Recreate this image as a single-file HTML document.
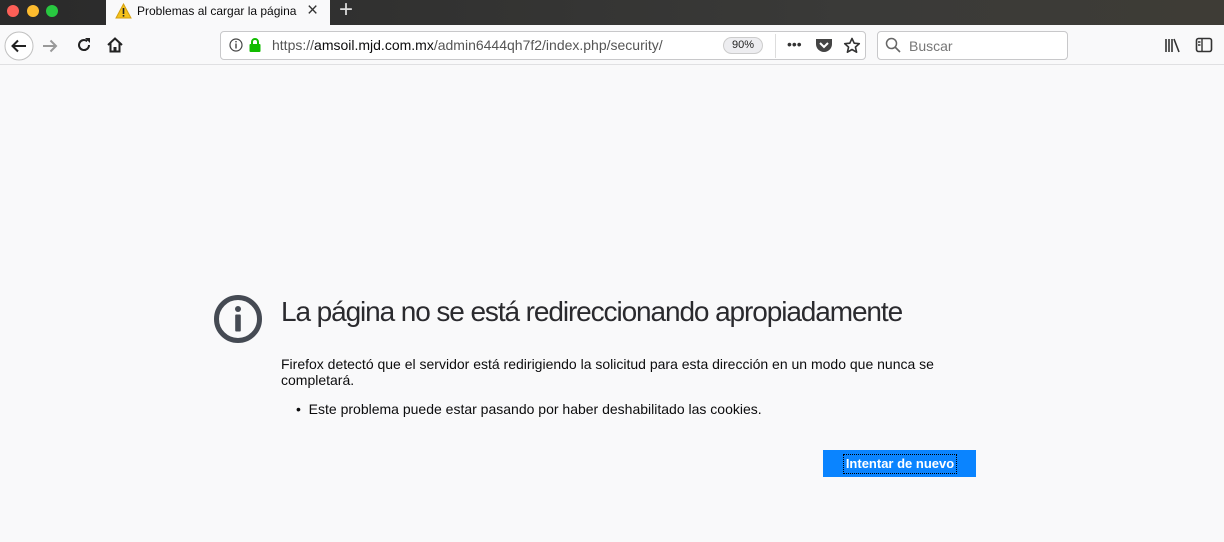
<!DOCTYPE html>
<html><head><meta charset="utf-8"><style>
*{margin:0;padding:0;box-sizing:border-box}
body{width:1224px;height:542px;background:#f9f9fa;font-family:"Liberation Sans",sans-serif;position:relative;overflow:hidden}
.abs{position:absolute}
.tabs{left:0;top:0;width:1224px;height:25px;background:linear-gradient(90deg,#2a2a2a,#3a3a38 70%,#3e3c36)}
.tab{left:106px;top:0;width:224px;height:25px;background:#f9f9fa;font-size:12px;color:#0c0c0d}
.toolbar{left:0;top:25px;width:1224px;height:40px;background:#f9f9fa;border-bottom:1px solid #e0e0e2}
.url{left:220px;top:31px;width:646px;height:29px;border:1px solid #c8c8ca;border-radius:4px;background:#fff}
.search{left:877px;top:31px;width:191px;height:29px;border:1px solid #c8c8ca;border-radius:4px;background:#fff}
</style></head><body>
<div class="abs tabs"></div>
<div class="abs" style="left:7px;top:5px;width:12px;height:12px;border-radius:50%;background:#fc5f57"></div>
<div class="abs" style="left:27px;top:5px;width:12px;height:12px;border-radius:50%;background:#fdbc2e"></div>
<div class="abs" style="left:46px;top:5px;width:12px;height:12px;border-radius:50%;background:#28c840"></div>
<div class="abs tab">
<svg class="abs" style="left:9px;top:3px" width="17" height="16" viewBox="0 0 17 16"><path d="M8.5 1L16 15H1Z" fill="#f5c21b" stroke="#d4a012" stroke-width="1"/><rect x="7.7" y="5" width="1.6" height="6" fill="#222"/><rect x="7.7" y="12" width="1.6" height="1.6" fill="#222"/></svg>
<span class="abs" style="left:31px;top:4px">Problemas al cargar la página</span>
<span class="abs" style="left:201px;top:0px;font-size:19px;color:#333">×</span>
</div>
<span class="abs" style="left:339px;top:-4px;font-size:24px;color:#ddd">+</span>
<div class="abs toolbar"></div>
<svg class="abs" style="left:4px;top:31px" width="30" height="30" viewBox="0 0 30 30"><circle cx="15" cy="15" r="14" fill="#fff" stroke="#c0c0c0"/><path d="M22 15H9M14 9.5L8.5 15L14 20.5" stroke="#222" stroke-width="2" fill="none"/></svg>
<svg class="abs" style="left:40px;top:36px" width="20" height="20"><path d="M17 10H4M9.5 4.5L4 10L9.5 15.5" stroke="#999" stroke-width="2" fill="none" transform="rotate(180 10 10)"/></svg>
<svg class="abs" style="left:75px;top:36px" width="18" height="18" viewBox="0 0 18 18"><path d="M14 9A5 5 0 1 1 12.2 5.2" stroke="#222" stroke-width="2" fill="none"/><path d="M10 2H15V7Z" fill="#222"/></svg>
<svg class="abs" style="left:106px;top:36px" width="18" height="18" viewBox="0 0 18 18"><path d="M2 9L9 2.5L16 9M4.5 7V15.5H13.5V7" stroke="#222" stroke-width="2" fill="none"/><rect x="7.5" y="11" width="3" height="4.5" fill="#222"/></svg>
<div class="abs url"></div>
<svg class="abs" style="left:229px;top:38px" width="14" height="14"><circle cx="7" cy="7" r="6" fill="none" stroke="#444" stroke-width="1.2"/><rect x="6.3" y="5.5" width="1.4" height="5" fill="#444"/><rect x="6.3" y="3" width="1.4" height="1.4" fill="#444"/></svg>
<svg class="abs" style="left:248px;top:37px" width="14" height="16"><path d="M4 7V5a3 3 0 0 1 6 0v2" stroke="#12bc00" stroke-width="2" fill="none"/><rect x="1.5" y="7" width="11" height="8" rx="1" fill="#12bc00"/></svg>
<span class="abs" style="left:272px;top:37px;font-size:14px;color:#555;white-space:nowrap;width:445px;overflow:hidden">https://<span style="color:#0c0c0d">amsoil.mjd.com.mx</span>/admin6444qh7f2/index.php/security/</span>
<div class="abs" style="left:723px;top:37px;width:40px;height:17px;border:1px solid #ccc;border-radius:9px;background:#ededf0;font-size:11px;text-align:center;line-height:15px;color:#222">90%</div>
<div class="abs" style="left:775px;top:34px;width:1px;height:24px;background:#ddd"></div>
<span class="abs" style="left:787px;top:36px;font-size:14px;color:#333;letter-spacing:0px">•••</span>
<svg class="abs" style="left:815px;top:37px" width="18" height="16" viewBox="0 0 18 16"><path d="M1 2h16v5a8 8 0 0 1-16 0Z" fill="#444"/><path d="M5 6l4 4 4-4" stroke="#fff" stroke-width="2" fill="none"/></svg>
<svg class="abs" style="left:843px;top:37px" width="18" height="17" viewBox="0 0 18 17"><path d="M9 1.5L11.2 6.2L16.3 6.7L12.4 10.1L13.6 15.2L9 12.5L4.4 15.2L5.6 10.1L1.7 6.7L6.8 6.2Z" fill="none" stroke="#333" stroke-width="1.6" stroke-linejoin="round"/></svg>
<div class="abs search"></div>
<svg class="abs" style="left:885px;top:37px" width="16" height="16"><circle cx="6.5" cy="6.5" r="5" fill="none" stroke="#666" stroke-width="1.5"/><path d="M10 10L15 15" stroke="#666" stroke-width="1.6"/></svg>
<span class="abs" style="left:909px;top:38px;font-size:14px;color:#777">Buscar</span>
<svg class="abs" style="left:1164px;top:37px" width="18" height="16"><path d="M2 2V15M5 2V15M8 2V15M10 2L15 15" stroke="#333" stroke-width="1.6"/></svg>
<svg class="abs" style="left:1195px;top:37px" width="18" height="16"><rect x="1.5" y="1.5" width="15" height="13" rx="2" fill="none" stroke="#333" stroke-width="1.6"/><path d="M7 2V14M3 5H5.5M3 8H5.5" stroke="#333" stroke-width="1.4"/></svg>

<svg class="abs" style="left:213px;top:294px" width="50" height="50" viewBox="0 0 50 50"><circle cx="25" cy="25" r="21.5" fill="none" stroke="#454a53" stroke-width="5"/><circle cx="25" cy="15" r="3" fill="#454a53"/><rect x="22.2" y="20.5" width="5.6" height="17" rx="1" fill="#454a53"/></svg>
<div class="abs" style="left:281px;top:296px;font-size:28px;font-weight:300;color:#2a2a2e;letter-spacing:-1.1px;white-space:nowrap">La página no se está redireccionando apropiadamente</div>
<div class="abs" style="left:281px;top:356px;width:690px;font-size:14px;line-height:16px;color:#0c0c0d">Firefox detectó que el servidor está redirigiendo la solicitud para esta dirección en un modo que nunca se completará.</div>
<div class="abs" style="left:296px;top:401px;font-size:14px;color:#0c0c0d;white-space:nowrap">•&nbsp; Este problema puede estar pasando por haber deshabilitado las cookies.</div>
<div class="abs" style="left:823px;top:450px;width:153px;height:27px;background:#0a84ff"></div>
<div class="abs" style="left:843px;top:454px;width:114px;height:20px;border:1px dotted #000;color:#fff;font-size:13px;font-weight:bold;text-align:center;line-height:18px;white-space:nowrap">Intentar de nuevo</div>
</body></html>
